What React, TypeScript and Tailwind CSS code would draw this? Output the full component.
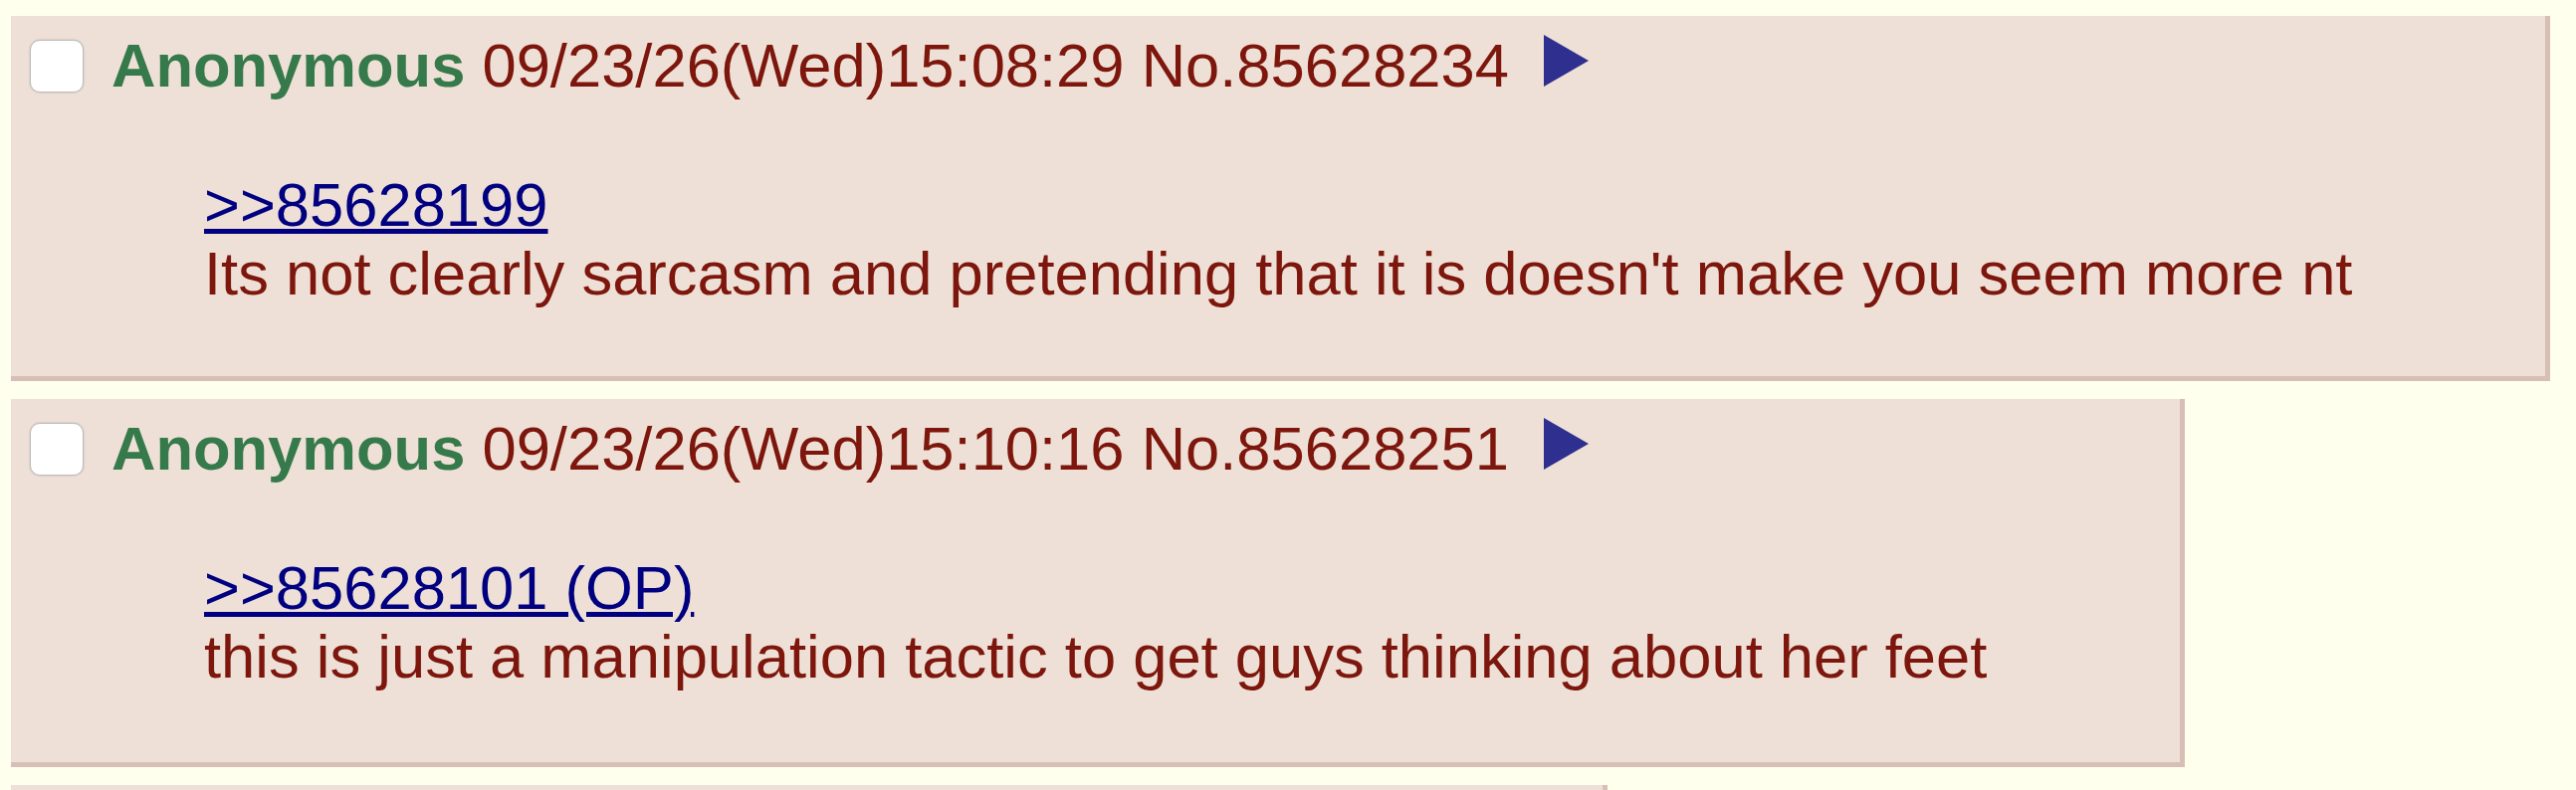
import React from 'react';

interface Reply {
  id: number;
  time: string;
  quote?: string;
  lines: string[];
  tail?: number;
  width?: string;
}

const replies: Reply[] = [
  {
    id: 85628234,
    time: '09/23/26(Wed)15:08:29',
    quote: '>>85628199',
    lines: ["Its not clearly sarcasm and pretending that it is doesn't make you seem more nt"],
  },
  {
    id: 85628251,
    time: '09/23/26(Wed)15:10:16',
    quote: '>>85628101 (OP)',
    lines: ['this is just a manipulation tactic to get guys thinking about her feet'],
    tail: 3,
  },
];

const MenuArrow: React.FC = () => (
  <svg width="45" height="52" viewBox="0 0 45 52" className="mt-[4px] ml-[35px] shrink-0">
    <polygon points="0,0 45,26 0,52" fill="#2e2f8f" />
  </svg>
);

const PostInfo: React.FC<{ id: number; time: string }> = ({ id, time }) => (
  <div className="flex items-start pt-[15px] pl-[19px]">
    <div className="mt-[9px] h-[53px] w-[54px] shrink-0 rounded-[10px] border border-[#bdbdbd] bg-white shadow-[0_0_2px_rgba(0,0,0,0.22)]" />
    <span className="ml-[28px] whitespace-nowrap leading-[70px]">
      <span className="font-bold text-[#367a4b]">Anonymous</span>{' '}
      <span className="text-[#7d160c]">{time}</span>{' '}
      <span className="text-[#7d160c]">No.{id}</span>
    </span>
    <MenuArrow />
  </div>
);

const Post: React.FC<{ reply: Reply }> = ({ reply }) => (
  <div className="w-fit bg-[#eee0d6] border-r-[5px] border-b-[5px] border-[#d7bfb6]">
    <PostInfo id={reply.id} time={reply.time} />
    <div
      className="mt-[70px] pl-[194px] pr-[194px] leading-[69px] whitespace-nowrap text-[#7d160c]"
      style={{ paddingBottom: 69 + (reply.tail ?? 0) }}
    >
      {reply.quote && (
        <a
          href="#"
          className="block w-fit text-[#000080] underline decoration-[5px] underline-offset-[3px]"
        >
          {reply.quote}
        </a>
      )}
      {reply.lines.map(line => (
        <div key={line}>{line}</div>
      ))}
    </div>
  </div>
);

const App: React.FC = () => (
  <div className="min-h-screen bg-[#ffffee] font-['Liberation_Sans',Arial,Helvetica,sans-serif] text-[61.5px]">
    <div className="flex flex-col items-start gap-[18px] pt-[16px] pl-[11px]">
      {replies.map(reply => (
        <Post key={reply.id} reply={reply} />
      ))}
      {/* next reply, only its top edge is on screen */}
      <div className="h-[120px] w-[1604px] bg-[#eee0d6] border-r-[5px] border-b-[5px] border-[#d7bfb6]" />
    </div>
  </div>
);

export default App;
